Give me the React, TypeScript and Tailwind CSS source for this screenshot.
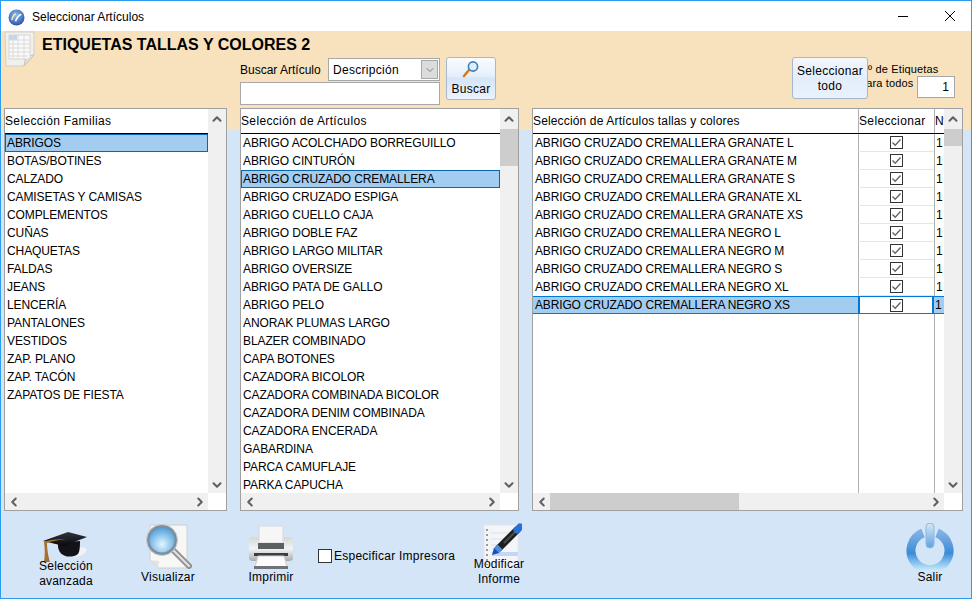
import { ChevronUp, ChevronDown, ChevronLeft, ChevronRight } from "lucide-react";

const familias = ["ABRIGOS", "BOTAS/BOTINES", "CALZADO", "CAMISETAS Y CAMISAS", "COMPLEMENTOS", "CUÑAS", "CHAQUETAS", "FALDAS", "JEANS", "LENCERÍA", "PANTALONES", "VESTIDOS", "ZAP. PLANO", "ZAP. TACÓN", "ZAPATOS DE FIESTA"];

const articulos = ["ABRIGO ACOLCHADO BORREGUILLO", "ABRIGO CINTURÓN", "ABRIGO CRUZADO CREMALLERA", "ABRIGO CRUZADO ESPIGA", "ABRIGO CUELLO CAJA", "ABRIGO DOBLE FAZ", "ABRIGO LARGO MILITAR", "ABRIGO OVERSIZE", "ABRIGO PATA DE GALLO", "ABRIGO PELO", "ANORAK PLUMAS LARGO", "BLAZER COMBINADO", "CAPA BOTONES", "CAZADORA BICOLOR", "CAZADORA COMBINADA BICOLOR", "CAZADORA DENIM COMBINADA", "CAZADORA ENCERADA", "GABARDINA", "PARCA CAMUFLAJE", "PARKA CAPUCHA"];

const tallas = ["GRANATE L", "GRANATE M", "GRANATE S", "GRANATE XL", "GRANATE XS", "NEGRO L", "NEGRO M", "NEGRO S", "NEGRO XL", "NEGRO XS"];

const VBar = ({ thumb }: { thumb?: string }) => (
  <div className="w-[18px] shrink-0 bg-[#f0f0f0] flex flex-col items-center">
    <div className="h-[20px] shrink-0 flex items-center justify-center text-[#606060]">
      <ChevronUp size={14} strokeWidth={3.5} />
    </div>
    {thumb && <div className={`w-full bg-[#cdcdcd] ${thumb}`} />}
    <div className="mt-auto h-[17px] flex items-center justify-center text-[#606060]">
      <ChevronDown size={14} strokeWidth={3.5} />
    </div>
  </div>
);

const HBar = ({ thumb }: { thumb?: boolean }) => (
  <div className="h-[17px] shrink-0 flex">
    <div className="flex-1 bg-[#f0f0f0] flex items-center">
      <div className="w-[17px] flex items-center justify-center text-[#606060]">
        <ChevronLeft size={14} strokeWidth={3.5} />
      </div>
      {thumb && <div className="h-full w-[189px] bg-[#cdcdcd]" />}
      <div className="ml-auto w-[17px] flex items-center justify-center text-[#606060]">
        <ChevronRight size={14} strokeWidth={3.5} />
      </div>
    </div>
    <div className="w-[18px] bg-white" />
  </div>
);

const ListPanel = ({ title, items, selected, width, thumb }: { title: string; items: string[]; selected: number; width: string; thumb?: string }) => (
  <div className={`${width} h-[403px] bg-white border border-[#a0a0a0] flex flex-col shrink-0`}>
    <div className="flex-1 flex min-h-0">
      <div className="flex-1 min-w-0 tracking-[-0.1px]">
        <div className="h-[25px] pb-[1px] border-b border-black flex items-center">
          <span className="tracking-[0.35px]">{title}</span>
        </div>
        {items.map((item, i) => (
          <div key={item} className={`h-[18px] flex items-center whitespace-nowrap overflow-hidden ${i === selected ? "bg-[#a3cdf0] border border-[#0b66b0] pl-[1px]" : "pl-[2px]"}`}>
            {item}
          </div>
        ))}
      </div>
      <VBar thumb={thumb} />
    </div>
    <HBar />
  </div>
);

const CheckBox = () => (
  <svg width="13" height="13" viewBox="0 0 13 13">
    <rect x="0.5" y="0.5" width="12" height="12" fill="#fff" stroke="#333" />
    <path d="M2.5 6.5 L5.2 9.2 L10.5 3.5" fill="none" stroke="#666" strokeWidth="1.4" />
  </svg>
);

const SheetIcon = () => (
  <svg width="32" height="36" viewBox="0 0 32 36" className="shrink-0">
    <path d="M1 1 H30 V24 L20 35 H2 Z" fill="#f0f0ec" stroke="#cfcfc8" />
    <path d="M30 24 L20 35 L22 25 Z" fill="#e6e6e0" stroke="#c4c4bc" />
    <rect x="5" y="4" width="21" height="24" fill="#fafafa" stroke="#d4d4d4" />
    <rect x="5" y="4" width="8" height="5" fill="#bcd7f2" />
    <path d="M5 9 H26 M5 13 H26 M5 17 H26 M5 21 H26 M5 25 H24 M9 4 V28 M14 4 V28 M20 4 V28" stroke="#dadada" />
  </svg>
);

const LensSmall = () => (
  <svg width="18" height="18" viewBox="0 0 18 18">
    <path d="M7 10 L2 16" stroke="#d87a18" strokeWidth="2.6" strokeLinecap="round" />
    <circle cx="11" cy="6.5" r="4.6" fill="#dcefff" stroke="#3f7fb8" strokeWidth="1.6" />
  </svg>
);

const CapIcon = () => (
  <svg width="48" height="36" viewBox="0 0 48 36">
    <defs>
      <linearGradient id="cap" x1="0" y1="0" x2="0" y2="1">
        <stop offset="0" stopColor="#34343c" />
        <stop offset="1" stopColor="#08080c" />
      </linearGradient>
    </defs>
    <path d="M37 17 C45 17 46 20 42 24 C38 27 30 27 28 26 Z" fill="#f2f2f2" />
    <path d="M16 13 C15 25 24 28 32 26 C37 25 38 22 38 11 Z" fill="#121218" />
    <path d="M1 11 L26 2 L45 7 L22 16 Z" fill="url(#cap)" />
    <path d="M24 9 C14 9 6 10 2 12 C3 18 3 26 2 32 L8 32 C6 26 5 18 5 13 C10 11 16 10 24 9 Z" fill="#a8702a" />
  </svg>
);

const MagnifierIcon = () => (
  <svg width="48" height="46" viewBox="0 0 48 46">
    <defs>
      <radialGradient id="glass" cx="0.5" cy="0.65" r="0.6">
        <stop offset="0" stopColor="#e2f6ff" />
        <stop offset="1" stopColor="#4d9fdc" />
      </radialGradient>
    </defs>
    <path d="M6 2 H43 V45 H14 L6 37 Z" fill="#f7f7f5" stroke="#cfcfcf" />
    <path d="M6 37 L14 45 L15 38 Z" fill="#e2e2e2" />
    <path d="M29 27 L45 43" stroke="#8f8f8f" strokeWidth="6" strokeLinecap="round" />
    <path d="M29 27 L45 43" stroke="#dedede" strokeWidth="2.4" strokeLinecap="round" />
    <circle cx="18" cy="17" r="14" fill="url(#glass)" stroke="#7e8e9c" strokeWidth="3" />
    <circle cx="18" cy="17" r="15.5" fill="none" stroke="#c9ced3" />
  </svg>
);

const PrinterIcon = () => (
  <svg width="46" height="44" viewBox="0 0 46 44">
    <defs>
      <linearGradient id="body" x1="0" y1="0" x2="0" y2="1">
        <stop offset="0" stopColor="#d6d8d8" />
        <stop offset="0.5" stopColor="#f2f3f3" />
        <stop offset="1" stopColor="#a8abad" />
      </linearGradient>
    </defs>
    <rect x="11" y="1" width="24" height="17" fill="#f6f6f6" stroke="#d8d8d8" />
    <path d="M1 16 Q1 12 5 12 H11 V18 H35 V12 H41 Q45 12 45 16 V33 Q45 36 41 36 H5 Q1 36 1 33 Z" fill="url(#body)" />
    <rect x="10" y="18" width="26" height="6" fill="#5b6063" />
    <rect x="6" y="28" width="34" height="3" fill="#3a3e42" />
    <path d="M10 31 H36 L39 42 H7 Z" fill="#fbfbfb" stroke="#d0d0d0" />
    <rect x="6" y="41" width="34" height="3" fill="#6f7376" />
  </svg>
);

const PenIcon = () => (
  <svg width="46" height="46" viewBox="0 0 46 46">
    <rect x="8" y="2" width="34" height="44" fill="#f4f5f9" stroke="#e6e6ea" />
    <path d="M11 6 V42" stroke="#9a9a9a" strokeWidth="2" strokeDasharray="2 3" />
    <path d="M15 10 H38 M15 16 H30 M15 22 H26" stroke="#dfe0e6" />
    <rect x="16" y="29" width="26" height="4" fill="#c3d6f4" />
    <path d="M22 26 L42 6" stroke="#1e1e1e" strokeWidth="7" />
    <path d="M28 20 L41 7" stroke="#4a4a4a" strokeWidth="2" />
    <path d="M41 7 L44 4" stroke="#2a6fd6" strokeWidth="7" strokeLinecap="round" />
    <path d="M20 28 L24 24" stroke="#4a90dc" strokeWidth="7" />
    <path d="M16 32 L18 25 L23 30 Z" fill="#1c4fb0" />
  </svg>
);

const PowerIcon = () => (
  <svg width="48" height="47" viewBox="0 0 48 47">
    <defs>
      <linearGradient id="ring" x1="0" y1="0" x2="0" y2="1">
        <stop offset="0" stopColor="#7fb0e2" />
        <stop offset="0.55" stopColor="#3b8bd8" />
        <stop offset="1" stopColor="#bfe8fc" />
      </linearGradient>
      <linearGradient id="bar" x1="0" y1="0" x2="0" y2="1">
        <stop offset="0" stopColor="#d6e8f8" />
        <stop offset="1" stopColor="#5ea2e0" />
      </linearGradient>
    </defs>
    <path d="M17 10 A19 19 0 1 0 31 10" fill="none" stroke="url(#ring)" strokeWidth="9" />
    <rect x="20" y="0" width="8" height="25" rx="4" fill="url(#bar)" stroke="#8db8e2" />
  </svg>
);

const Tool = ({ top, label, overlap, children, className }: { top: string; label: string[]; overlap?: string; children: React.ReactNode; className?: string }) => (
  <div className={`w-[80px] shrink-0 flex flex-col items-center ${top} ${className ?? ""}`}>
    {children}
    <div className={`relative text-center leading-[15px] tracking-[0.2px] whitespace-nowrap ${overlap ?? ""}`}>
      {label.map((l) => (
        <div key={l}>{l}</div>
      ))}
    </div>
  </div>
);

export default function App() {
  return (
    <div className="w-[972px] h-[599px] border border-[#2d9bf0] flex flex-col text-[12px] text-black overflow-hidden font-['Liberation_Sans',Arial,sans-serif]">
      {/* barra de titulo */}
      <div className="h-[30px] shrink-0 bg-white flex items-center pl-[7px] pt-[2px]">
        <svg width="17" height="17" viewBox="0 0 16 16">
          <defs>
            <radialGradient id="app" cx="0.45" cy="0.35" r="0.8">
              <stop offset="0" stopColor="#8fbdf0" />
              <stop offset="1" stopColor="#123f9c" />
            </radialGradient>
          </defs>
          <circle cx="8" cy="8" r="7.5" fill="url(#app)" />
          <path d="M3.5 10.5 Q5 5 7.5 4.5" stroke="#f6e9a8" strokeWidth="1.5" fill="none" />
          <path d="M7 11.5 Q9 6.5 12.5 5" stroke="#fff" strokeWidth="1.5" fill="none" />
        </svg>
        <span className="ml-[7px]">Seleccionar Artículos</span>
        <svg width="12" height="12" viewBox="0 0 12 12" className="ml-auto mr-[35px] mb-[2px]">
          <path d="M1 6.5 H11" stroke="#000" />
        </svg>
        <svg width="12" height="12" viewBox="0 0 12 12" className="mr-[15px] mb-[2px]">
          <path d="M1 1 L11 11 M11 1 L1 11" stroke="#000" />
        </svg>
      </div>

      <div className="flex-1 flex flex-col bg-[linear-gradient(#f8e2bd_0,#f8e2bd_99px,#d4e5f8_99px)]">
        {/* cabecera */}
        <div className="h-[26px] shrink-0 flex items-start pl-[3px]">
          <SheetIcon />
          <h1 className="ml-[6px] mt-[5px] text-[16px] leading-[18px] font-bold">ETIQUETAS TALLAS Y COLORES 2</h1>
        </div>
        <div className="h-[51px] shrink-0 flex items-start pl-[239px] pr-[17px]">
          <div className="w-[200px] mt-[1px]">
            <div className="flex items-center justify-between h-[23px]">
              <span>Buscar Artículo</span>
              <div className="w-[112px] h-[23px] bg-white border border-[#a8a8a8] flex items-center pl-[4px]">
                <span className="tracking-[0.3px]">Descripción</span>
                <div className="ml-auto mr-[1px] w-[17px] h-[19px] bg-[#dcdcdc] border border-[#a8a8a8] flex items-center justify-center text-[#606060]">
                  <ChevronDown size={12} strokeWidth={1.5} />
                </div>
              </div>
            </div>
            <div className="mt-[1px] h-[23px] bg-white border border-[#a8a8a8]" />
          </div>
          <button className="ml-[6px] w-[50px] h-[43px] rounded-[3px] border border-[#a6b8cc] bg-[linear-gradient(#fafcff,#e4eefb_45%,#d4e5f8_50%,#eaf3fe)] flex flex-col items-center pt-[2px] tracking-[0.3px]">
            <LensSmall />
            <span className="leading-[18px] mt-[2px]">Buscar</span>
          </button>
          <button className="relative z-10 ml-auto w-[76px] h-[42px] pt-[2px] rounded-[3px] border border-[#a6b8cc] bg-[linear-gradient(#f5f6f8,#e4eefb_50%,#e8f1fd)] leading-[15px] tracking-[0.3px]">
            Seleccionar
            <br />
            todo
          </button>
          <div className="relative w-[86px] h-[41px] shrink-0 text-[11px] leading-[14px] tracking-[0.15px]">
            <div className="absolute left-[-8px] top-[5px] whitespace-nowrap">Nº de Etiquetas</div>
            <div className="absolute left-[-8px] top-[19px] whitespace-nowrap">para todos</div>
            <div className="absolute left-[49px] top-[19px] w-[38px] h-[22px] bg-white border border-[#a8a8a8] text-[12px] flex items-center justify-end pr-[5px]">1</div>
          </div>
        </div>

        {/* listas */}
        <div className="flex gap-[13px] pl-[3px]">
          <ListPanel title="Selección Familias" items={familias} selected={0} width="w-[223px]" />
          <ListPanel title="Selección de Artículos" items={articulos} selected={2} width="w-[279px]" thumb="h-[37px]" />

          <div className="w-[431px] h-[403px] bg-white border border-[#a0a0a0] flex flex-col shrink-0">
            <div className="flex-1 flex min-h-0">
              <div className="flex-1 min-w-0 flex flex-col">
                <div className="h-[25px] shrink-0 border-b border-black flex items-center">
                  <div className="w-[325px] tracking-[0.15px] pb-[1px]">Selección de Artículos tallas y colores</div>
                  <div className="w-[76px] border-l border-[#b0b0b0] h-full flex items-center tracking-[0.35px] pb-[1px]">Seleccionar</div>
                  <div className="flex-1 overflow-hidden border-l border-[#b0b0b0] h-full flex items-center pb-[1px]">Nº</div>
                </div>
                {tallas.map((t, i) => {
                  const sel = i === tallas.length - 1;
                  return (
                    <div key={t} className={`h-[18px] flex items-stretch tracking-[-0.15px] ${sel ? "bg-[#a3cdf0] border-y border-[#0078d7]" : ""}`}>
                      <div className="w-[325px] pl-[2px] flex items-center whitespace-nowrap">ABRIGO CRUZADO CREMALLERA {t}</div>
                      <div className={`w-[76px] flex items-center justify-center ${sel ? "bg-white border-x-2 border-[#0078d7]" : "border-l border-b border-l-[#b0b0b0] border-b-[#e2e6ea]"}`}>
                        <CheckBox />
                      </div>
                      <div className={`flex-1 flex items-center pl-[1px] ${sel ? "" : "border-l border-[#b0b0b0]"}`}>1</div>
                    </div>
                  );
                })}
                <div className="flex-1 flex">
                  <div className="w-[325px]" />
                  <div className="w-[76px] border-l border-[#b0b0b0]" />
                  <div className="flex-1 border-l border-[#b0b0b0]" />
                </div>
              </div>
              <VBar thumb="h-[17px]" />
            </div>
            <HBar thumb />
          </div>
        </div>

        {/* barra inferior */}
        <div className="flex-1 flex items-start pl-[25px] pr-[1px]">
          <Tool top="mt-[19px]" label={["Selección", "avanzada"]} overlap="mt-[-7px]">
            <CapIcon />
          </Tool>
          <Tool top="mt-[12px]" label={["Visualizar"]} className="ml-[22px]" overlap="mt-[1px]">
            <MagnifierIcon />
          </Tool>
          <Tool top="mt-[14px]" label={["Imprimir"]} className="ml-[23px]" overlap="mt-[1px]">
            <PrinterIcon />
          </Tool>
          <div className="ml-[7px] mt-[36px] w-[141px] shrink-0 flex items-center tracking-[0.25px]">
            <div className="w-[14px] h-[14px] bg-white border border-[#333] mr-[2px]" />
            Especificar Impresora
          </div>
          <Tool top="mt-[12px]" label={["Modificar", "Informe"]} overlap="mt-[-12px]">
            <PenIcon />
          </Tool>
          <Tool top="mt-[12px]" label={["Salir"]} className="ml-auto">
            <PowerIcon />
          </Tool>
        </div>
      </div>
    </div>
  );
}
